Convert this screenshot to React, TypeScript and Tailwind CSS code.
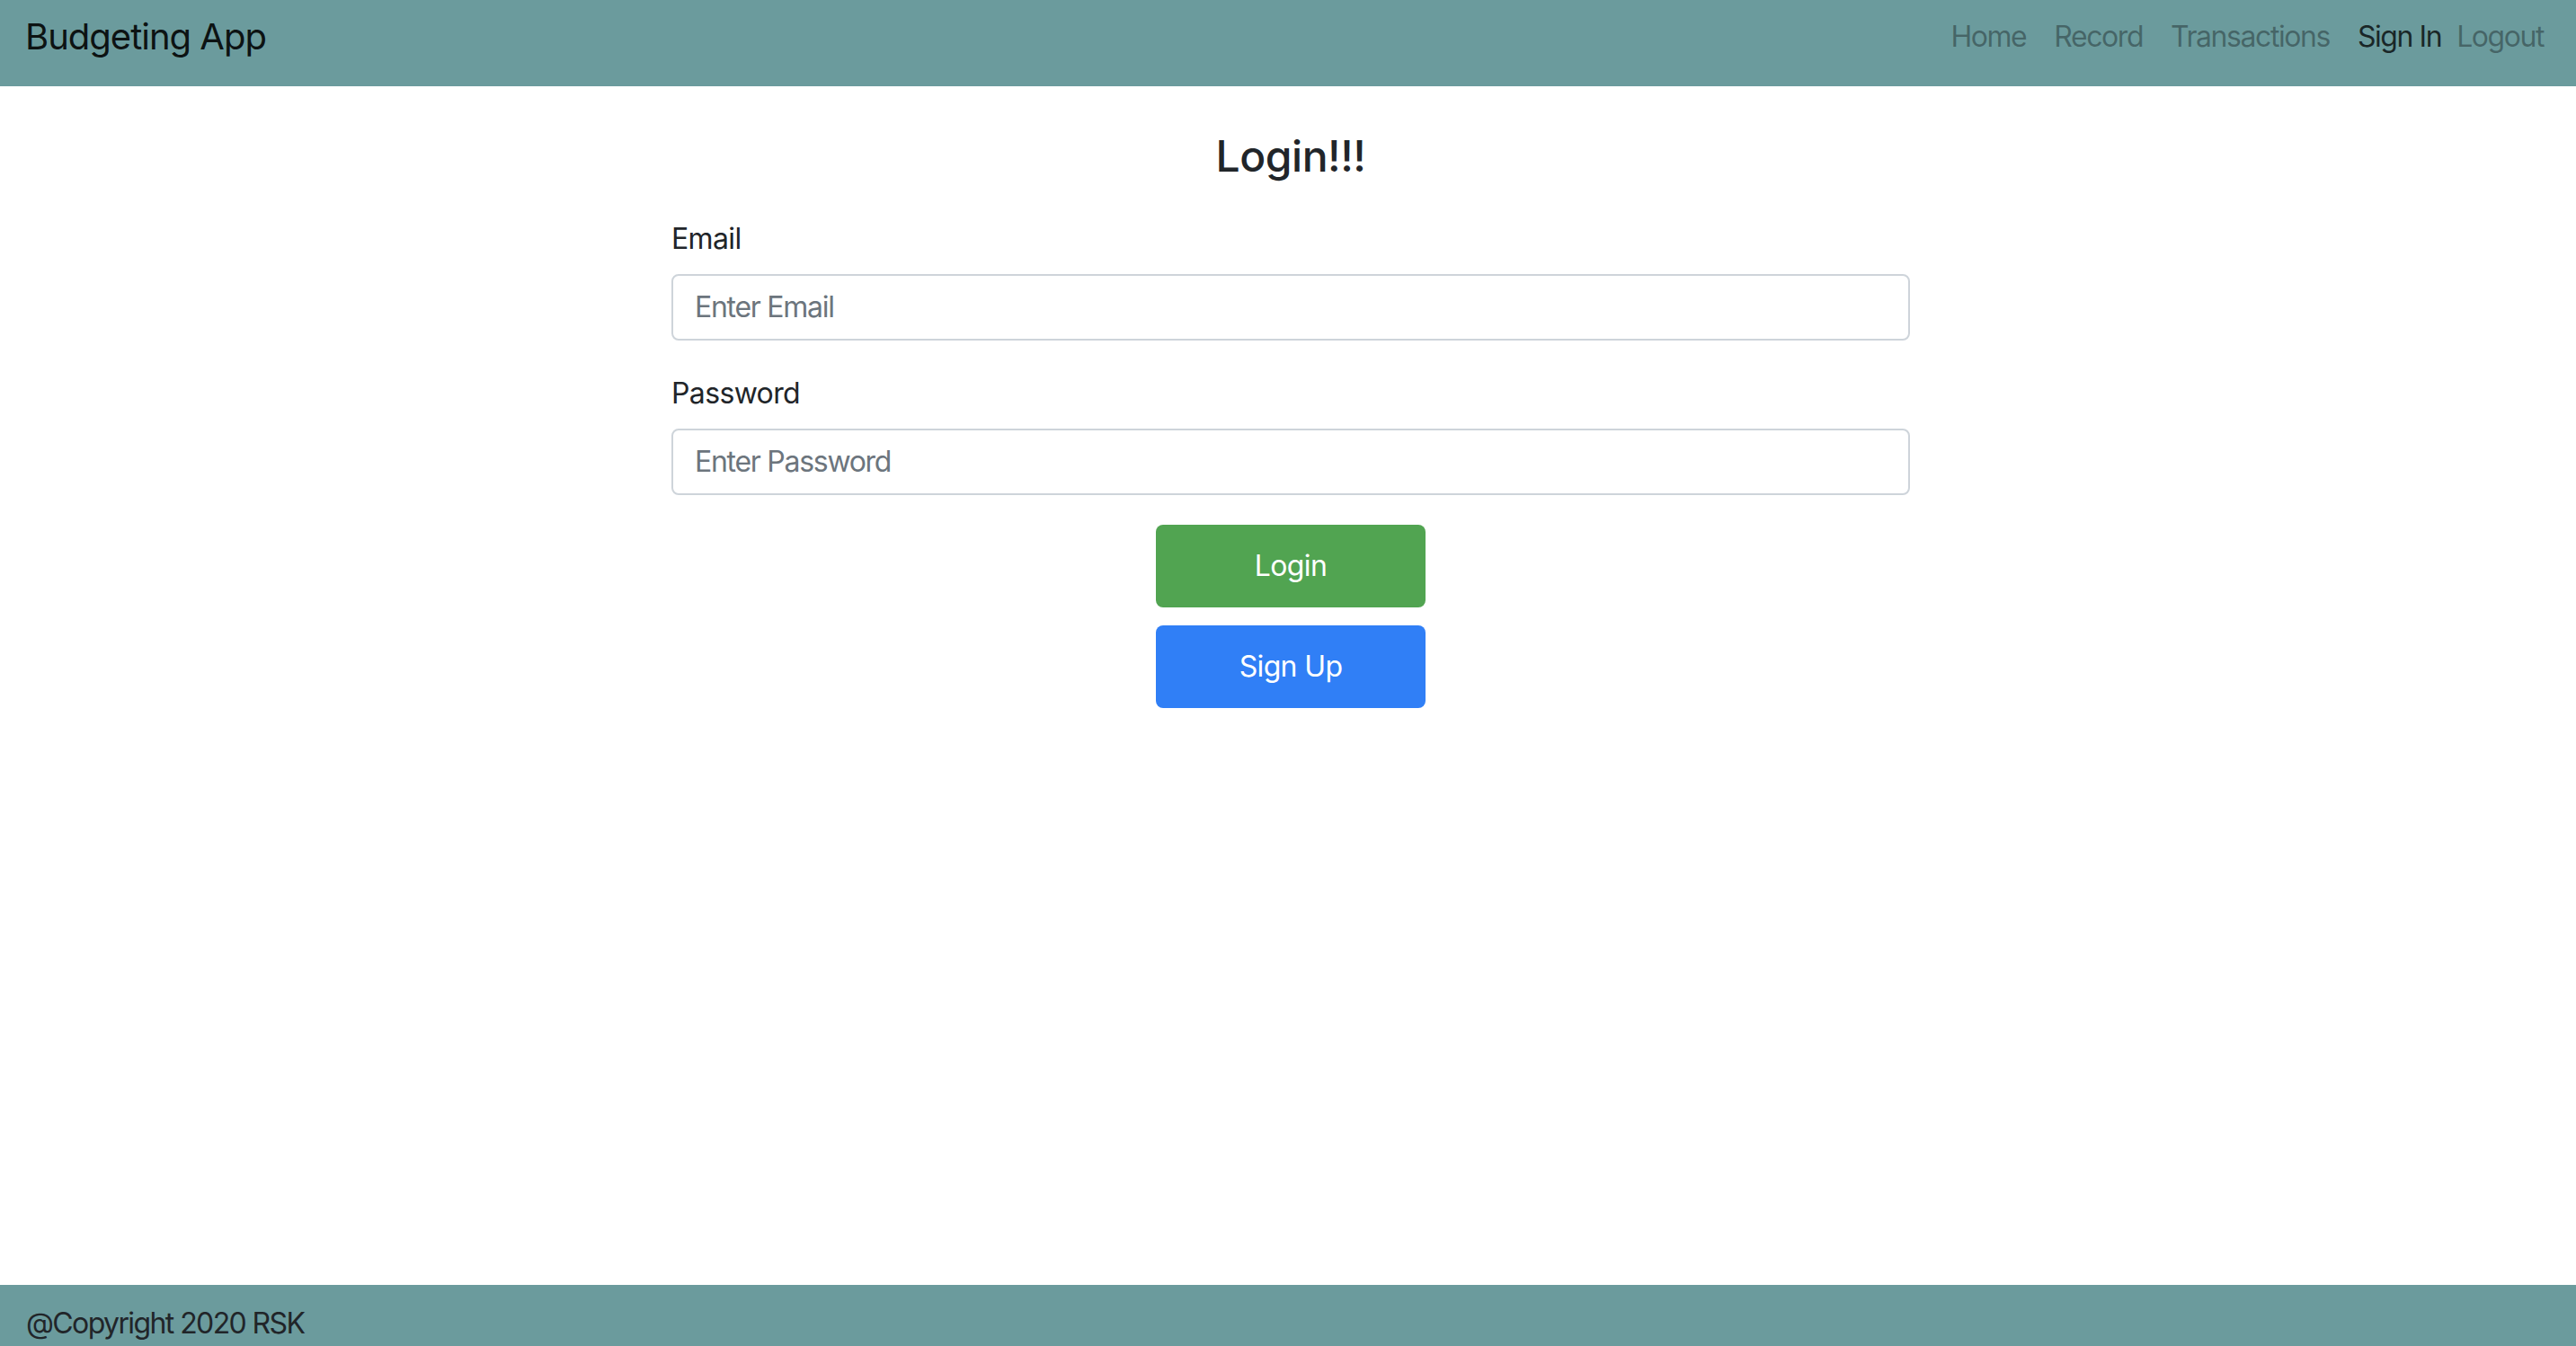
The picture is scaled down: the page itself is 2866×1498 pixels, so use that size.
import React, { useState } from "react";

const links = ["Home", "Record", "Transactions"];

export default function App() {
  const [email, setEmail] = useState("");
  const [password, setPassword] = useState("");

  return (
    <div className="min-h-screen flex flex-col bg-white font-['Inter','Liberation_Sans',sans-serif] text-[#212529]">
      <nav className="h-[96px] bg-[#6b9b9d] flex items-center justify-between pl-[28px] pr-[36px] pb-[14px]">
        <a href="#" className="text-[40px] leading-none tracking-[-0.025em] text-black/90">
          Budgeting App
        </a>
        <ul className="flex items-center text-[32px] leading-none tracking-[-0.045em]">
          {links.map((l) => (
            <li key={l} className="mr-[31px]">
              <a href="#" className="text-black/35">
                {l}
              </a>
            </li>
          ))}
          <li className="mr-[17px]">
            <a href="#" className="text-black/75">
              Sign In
            </a>
          </li>
          <li>
            <a href="#" className="text-black/35">
              Logout
            </a>
          </li>
        </ul>
      </nav>

      <main className="flex-1 pt-[49px] pl-[6px]">
        <h4 className="text-center text-[48px] leading-[1.2] font-medium tracking-[-0.01em] mb-[39px]">Login!!!</h4>
        <form className="w-[1378px] mx-auto tracking-[-0.04em]" onSubmit={(e) => e.preventDefault()}>
          <label className="block text-[32px] leading-[48px] mb-[15px]">Email</label>
          <input
            type="email"
            value={email}
            onChange={(e) => setEmail(e.target.value)}
            placeholder="Enter Email"
            className="block w-full h-[74px] border-2 border-[#ced4da] rounded-[8px] px-[24px] text-[32px] tracking-[-0.04em] placeholder:text-[#6c757d] outline-none"
          />
          <label className="block text-[32px] leading-[48px] mt-[35px] mb-[15px]">Password</label>
          <input
            type="password"
            value={password}
            onChange={(e) => setPassword(e.target.value)}
            placeholder="Enter Password"
            className="block w-full h-[74px] border-2 border-[#ced4da] rounded-[8px] px-[24px] text-[32px] tracking-[-0.04em] placeholder:text-[#6c757d] outline-none"
          />
          <div className="flex flex-col items-center gap-[20px] mt-[33px]">
            <button type="submit" className="w-[300px] h-[92px] rounded-[8px] bg-[#51a451] text-white text-[32px]">
              Login
            </button>
            <button type="button" className="w-[300px] h-[92px] rounded-[8px] bg-[#307ff6] text-white text-[32px]">
              Sign Up
            </button>
          </div>
        </form>
      </main>

      <footer className="h-[68px] bg-[#6b9b9d] pl-[29px] pt-[19px]">
        <p className="text-[32px] leading-[48px] tracking-[-0.05em] text-[#212529]">@Copyright 2020 RSK</p>
      </footer>
    </div>
  );
}
